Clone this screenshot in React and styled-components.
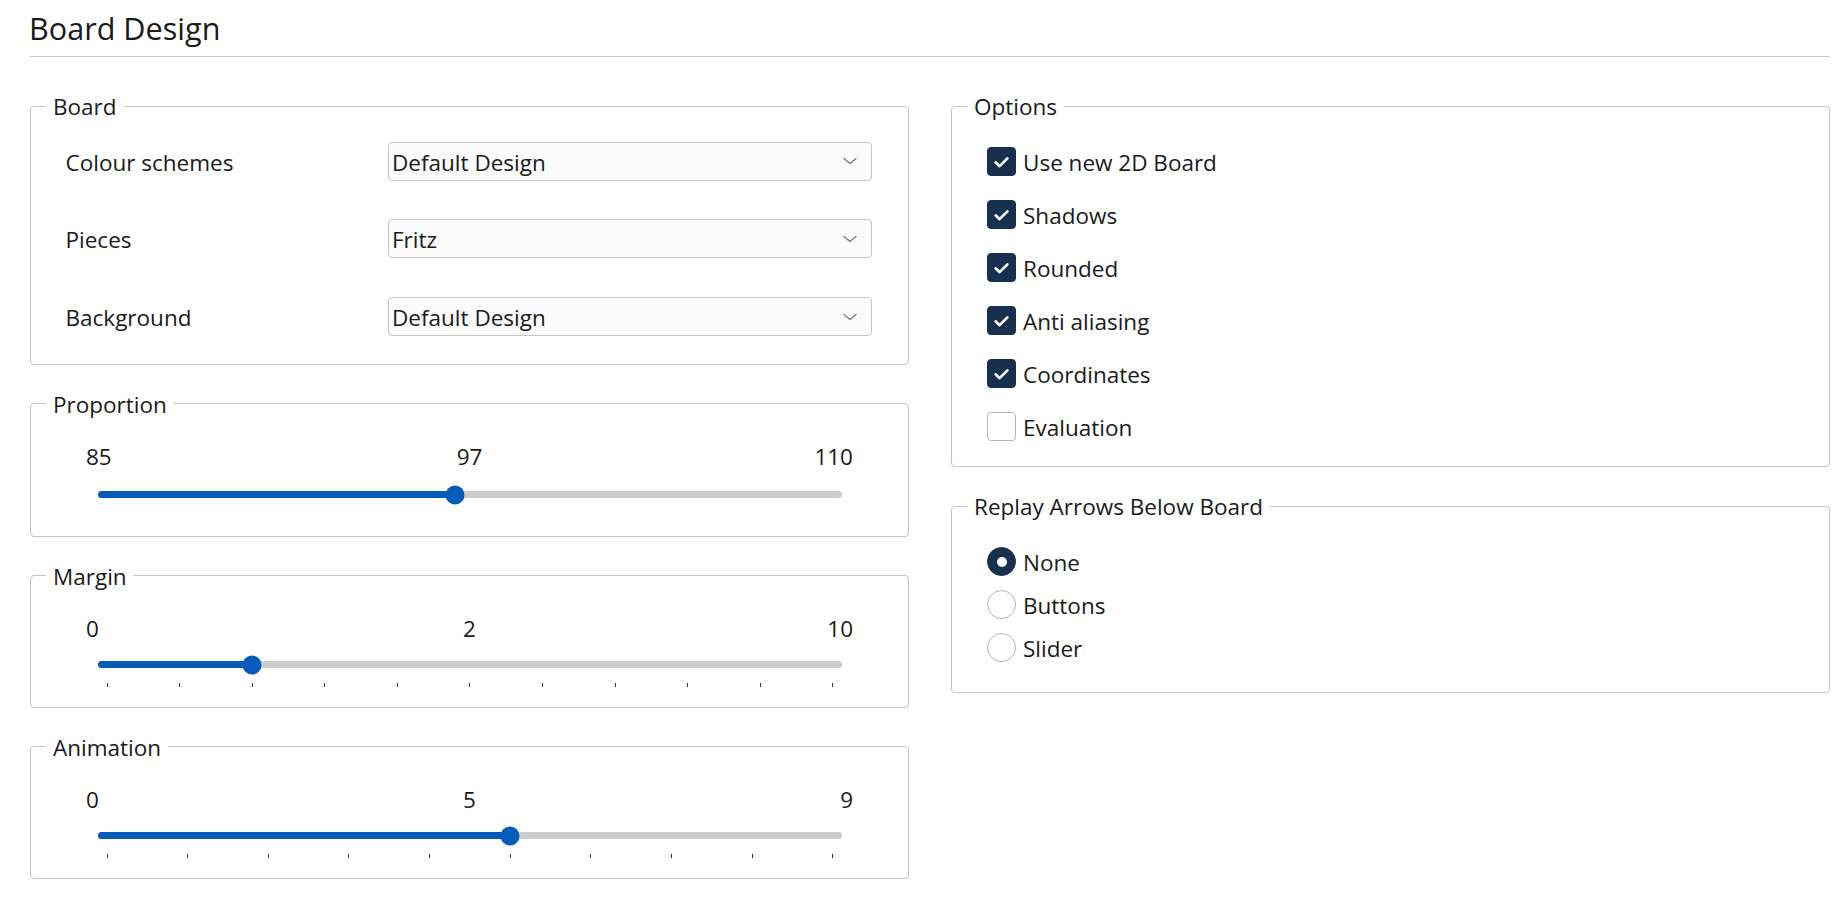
import React from 'react';
import styled, { createGlobalStyle } from 'styled-components';

const GlobalStyle = createGlobalStyle`
  html, body { margin: 0; padding: 0; background: #ffffff; }
  body {
    font-family: "Open Sans", "Noto Sans", sans-serif;
    color: #1a1a1a;
  }
  * { box-sizing: border-box; }
`;

const Page = styled.div`
  padding: 0 16px 0 30px;
  font-size: 22.5px;
`;

const Title = styled.h1`
  margin: 0;
  padding: 8px 0 7px;
  font-size: 30.6px;
  font-weight: 400;
  line-height: 41px;
  border-bottom: 1px solid #c8c8c8;
  text-indent: -1px;
`;

const Columns = styled.div`
  margin-top: 34px;
  display: grid;
  grid-template-columns: 1fr 1fr;
  column-gap: 42px;
  align-items: start;
`;

const Column = styled.div`
  display: flex;
  flex-direction: column;
  gap: 24px;
`;

const Group = styled.fieldset`
  margin: 0;
  padding: 0 15px;
  min-width: 0;
  border: 1px solid #c3c3c3;
  border-radius: 4px;
`;

const Legend = styled.legend`
  padding: 2px 7px 0;
  font-size: 22.5px;
  line-height: 28px;
`;

/* ---------- Board form ---------- */
const FormGrid = styled.div`
  display: grid;
  grid-template-columns: 322.5px 1fr;
  row-gap: 38.7px;
  align-items: center;
  margin: 20.7px 21px 27.9px 19.5px;
`;

const FieldLabel = styled.span`
  padding-top: 3px;
  line-height: 30px;
`;

const Select = styled.div`
  height: 39px;
  display: flex;
  align-items: center;
  justify-content: space-between;
  padding: 0 14px 0 3px;
  border: 1px solid #c6c6c6;
  border-radius: 4px;
  background: #fbfbfb;
  line-height: 30px;
`;

const SelectText = styled.span`
  padding-top: 3px;
`;

const Chevron = () => (
  <svg width="14" height="8" viewBox="0 0 14 8" fill="none">
    <path d="M1 1.5 L7 6.5 L13 1.5" stroke="#7a7a7a" strokeWidth="1.3" strokeLinecap="round" strokeLinejoin="round" />
  </svg>
);

/* ---------- Sliders ---------- */
const SliderBody = styled.div`
  margin: 23px 40px 0 40px;
  padding-bottom: ${(p) => (p.$ticks ? 19.8 : 31.3)}px;
`;

const ValueRow = styled.div`
  display: grid;
  grid-template-columns: 1fr auto 1fr;
  line-height: 30px;
`;

const Value = styled.span`
  text-align: ${(p) => p.$align};
`;

const TrackArea = styled.div`
  margin: ${(p) => (p.$ticks ? 11 : 12.7)}px 11px 0 12px;
  height: 20px;
  display: flex;
  align-items: center;
`;

const Track = styled.div`
  position: relative;
  flex: 1;
  height: 7px;
  border-radius: 4px;
  background: #cccccc;
`;

const Fill = styled.div`
  position: absolute;
  left: 0;
  top: 0;
  bottom: 0;
  border-radius: 4px;
  background: #075cb9;
`;

const Thumb = styled.div`
  position: absolute;
  top: 50%;
  width: 19px;
  height: 19px;
  border-radius: 50%;
  background: #075cb9;
  transform: translate(-50%, -50%);
`;

const Ticks = styled.div`
  display: flex;
  justify-content: space-between;
  margin: 7.7px 19.5px 0 20.5px;
  height: 4.5px;
`;

const Tick = styled.span`
  width: 1px;
  height: 100%;
  background: #3a3a3a;
`;

function Slider({ min, max, value, ticks }) {
  const f = (value - min) / (max - min);
  const pos = `calc(8.5px + ${f} * (100% - 17px))`;
  return (
    <SliderBody $ticks={!!ticks}>
      <ValueRow>
        <Value $align="left">{min}</Value>
        <Value $align="center">{value}</Value>
        <Value $align="right">{max}</Value>
      </ValueRow>
      <TrackArea $ticks={!!ticks}>
        <Track>
          <Fill style={{ width: pos }} />
          <Thumb style={{ left: pos }} />
        </Track>
      </TrackArea>
      {ticks ? (
        <Ticks>
          {Array.from({ length: ticks }).map((_, i) => (
            <Tick key={i} />
          ))}
        </Ticks>
      ) : null}
    </SliderBody>
  );
}

/* ---------- Checkboxes & radios ---------- */
const ChoiceList = styled.div`
  display: flex;
  flex-direction: column;
  gap: ${(p) => p.$gap}px;
  margin: ${(p) => p.$top}px 0 ${(p) => p.$bottom}px 20px;
`;

const ChoiceRow = styled.div`
  display: flex;
  align-items: center;
  height: 29px;
`;

const ChoiceText = styled.span`
  margin-left: 7px;
  padding-top: 3px;
  line-height: 30px;
`;

const Box = styled.span`
  flex: none;
  width: 29px;
  height: 29px;
  border-radius: 4px;
  display: flex;
  align-items: center;
  justify-content: center;
  background: ${(p) => (p.$on ? '#173050' : '#ffffff')};
  border: 1px solid ${(p) => (p.$on ? '#173050' : '#b4b4b4')};
`;

const Radio = styled.span`
  flex: none;
  width: 29px;
  height: 29px;
  border-radius: 50%;
  display: flex;
  align-items: center;
  justify-content: center;
  background: ${(p) => (p.$on ? '#173050' : '#ffffff')};
  border: 1px solid ${(p) => (p.$on ? '#173050' : '#b4b4b4')};
`;

const Dot = styled.span`
  width: 10px;
  height: 10px;
  border-radius: 50%;
  background: #ffffff;
`;

const CheckMark = () => (
  <svg width="27" height="27" viewBox="0 0 27 27" fill="none">
    <path d="M7.6 14.3 L11.6 18.2 L19.4 10.4" stroke="#ffffff" strokeWidth="2.6" strokeLinecap="round" strokeLinejoin="round" />
  </svg>
);

const boardRows = [
  ['Colour schemes', 'Default Design'],
  ['Pieces', 'Fritz'],
  ['Background', 'Default Design'],
];

const options = [
  ['Use new 2D Board', true],
  ['Shadows', true],
  ['Rounded', true],
  ['Anti aliasing', true],
  ['Coordinates', true],
  ['Evaluation', false],
];

const replay = [
  ['None', true],
  ['Buttons', false],
  ['Slider', false],
];

export default function App() {
  return (
    <>
      <GlobalStyle />
      <Page>
        <Title>Board Design</Title>
        <Columns>
          <Column>
            <Group>
              <Legend>Board</Legend>
              <FormGrid>
                {boardRows.map(([label, value]) => (
                  <React.Fragment key={label}>
                    <FieldLabel>{label}</FieldLabel>
                    <Select>
                      <SelectText>{value}</SelectText>
                      <Chevron />
                    </Select>
                  </React.Fragment>
                ))}
              </FormGrid>
            </Group>
            <Group>
              <Legend>Proportion</Legend>
              <Slider min={85} max={110} value={97} />
            </Group>
            <Group>
              <Legend>Margin</Legend>
              <Slider min={0} max={10} value={2} ticks={11} />
            </Group>
            <Group>
              <Legend>Animation</Legend>
              <Slider min={0} max={9} value={5} ticks={10} />
            </Group>
          </Column>
          <Column>
            <Group>
              <Legend>Options</Legend>
              <ChoiceList $gap={24} $top={25.7} $bottom={25.5}>
                {options.map(([label, on]) => (
                  <ChoiceRow key={label}>
                    <Box $on={on}>{on ? <CheckMark /> : null}</Box>
                    <ChoiceText>{label}</ChoiceText>
                  </ChoiceRow>
                ))}
              </ChoiceList>
            </Group>
            <Group>
              <Legend>Replay Arrows Below Board</Legend>
              <ChoiceList $gap={14} $top={26} $bottom={29.5}>
                {replay.map(([label, on]) => (
                  <ChoiceRow key={label}>
                    <Radio $on={on}>{on ? <Dot /> : null}</Radio>
                    <ChoiceText>{label}</ChoiceText>
                  </ChoiceRow>
                ))}
              </ChoiceList>
            </Group>
          </Column>
        </Columns>
      </Page>
    </>
  );
}
